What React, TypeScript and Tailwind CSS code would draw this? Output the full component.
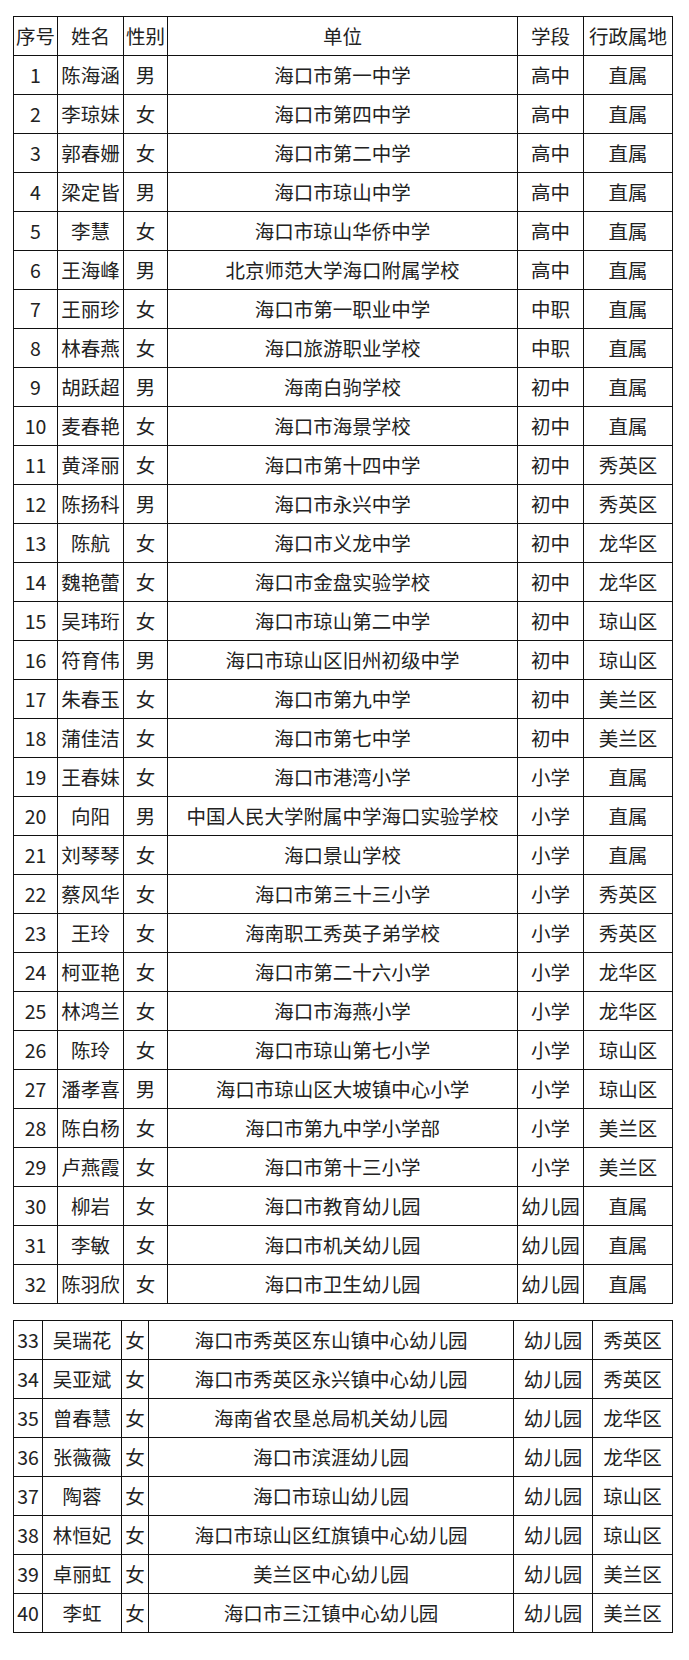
type Row = [string, string, string, string, string, string]

const rowsA: Row[] = [
  ['1', '陈海涵', '男', '海口市第一中学', '高中', '直属'],
  ['2', '李琼妹', '女', '海口市第四中学', '高中', '直属'],
  ['3', '郭春姗', '女', '海口市第二中学', '高中', '直属'],
  ['4', '梁定皆', '男', '海口市琼山中学', '高中', '直属'],
  ['5', '李慧', '女', '海口市琼山华侨中学', '高中', '直属'],
  ['6', '王海峰', '男', '北京师范大学海口附属学校', '高中', '直属'],
  ['7', '王丽珍', '女', '海口市第一职业中学', '中职', '直属'],
  ['8', '林春燕', '女', '海口旅游职业学校', '中职', '直属'],
  ['9', '胡跃超', '男', '海南白驹学校', '初中', '直属'],
  ['10', '麦春艳', '女', '海口市海景学校', '初中', '直属'],
  ['11', '黄泽丽', '女', '海口市第十四中学', '初中', '秀英区'],
  ['12', '陈扬科', '男', '海口市永兴中学', '初中', '秀英区'],
  ['13', '陈航', '女', '海口市义龙中学', '初中', '龙华区'],
  ['14', '魏艳蕾', '女', '海口市金盘实验学校', '初中', '龙华区'],
  ['15', '吴玮珩', '女', '海口市琼山第二中学', '初中', '琼山区'],
  ['16', '符育伟', '男', '海口市琼山区旧州初级中学', '初中', '琼山区'],
  ['17', '朱春玉', '女', '海口市第九中学', '初中', '美兰区'],
  ['18', '蒲佳洁', '女', '海口市第七中学', '初中', '美兰区'],
  ['19', '王春妹', '女', '海口市港湾小学', '小学', '直属'],
  ['20', '向阳', '男', '中国人民大学附属中学海口实验学校', '小学', '直属'],
  ['21', '刘琴琴', '女', '海口景山学校', '小学', '直属'],
  ['22', '蔡风华', '女', '海口市第三十三小学', '小学', '秀英区'],
  ['23', '王玲', '女', '海南职工秀英子弟学校', '小学', '秀英区'],
  ['24', '柯亚艳', '女', '海口市第二十六小学', '小学', '龙华区'],
  ['25', '林鸿兰', '女', '海口市海燕小学', '小学', '龙华区'],
  ['26', '陈玲', '女', '海口市琼山第七小学', '小学', '琼山区'],
  ['27', '潘孝喜', '男', '海口市琼山区大坡镇中心小学', '小学', '琼山区'],
  ['28', '陈白杨', '女', '海口市第九中学小学部', '小学', '美兰区'],
  ['29', '卢燕霞', '女', '海口市第十三小学', '小学', '美兰区'],
  ['30', '柳岩', '女', '海口市教育幼儿园', '幼儿园', '直属'],
  ['31', '李敏', '女', '海口市机关幼儿园', '幼儿园', '直属'],
  ['32', '陈羽欣', '女', '海口市卫生幼儿园', '幼儿园', '直属'],
]

const rowsB: Row[] = [
  ['33', '吴瑞花', '女', '海口市秀英区东山镇中心幼儿园', '幼儿园', '秀英区'],
  ['34', '吴亚斌', '女', '海口市秀英区永兴镇中心幼儿园', '幼儿园', '秀英区'],
  ['35', '曾春慧', '女', '海南省农垦总局机关幼儿园', '幼儿园', '龙华区'],
  ['36', '张薇薇', '女', '海口市滨涯幼儿园', '幼儿园', '龙华区'],
  ['37', '陶蓉', '女', '海口市琼山幼儿园', '幼儿园', '琼山区'],
  ['38', '林恒妃', '女', '海口市琼山区红旗镇中心幼儿园', '幼儿园', '琼山区'],
  ['39', '卓丽虹', '女', '美兰区中心幼儿园', '幼儿园', '美兰区'],
  ['40', '李虹', '女', '海口市三江镇中心幼儿园', '幼儿园', '美兰区'],
]

const cell = 'h-[39px] border border-[#111] p-0 text-center align-middle whitespace-nowrap'

function Sheet({ widths, rows, header }: { widths: number[]; rows: Row[]; header?: Row }) {
  return (
    <table className="w-[659px] table-fixed border-collapse">
      <colgroup>
        {widths.map((w, i) => (
          <col key={i} style={{ width: w }} />
        ))}
      </colgroup>
      <tbody>
        {header && (
          <tr>
            {header.map((h, i) => (
              <td key={i} className={cell}>
                {h}
              </td>
            ))}
          </tr>
        )}
        {rows.map((r) => (
          <tr key={r[0]}>
            {r.map((v, i) => (
              <td key={i} className={cell}>
                {v}
              </td>
            ))}
          </tr>
        ))}
      </tbody>
    </table>
  )
}

export default function App() {
  return (
    <div
      className="h-[1660px] w-[689px] bg-white pl-[13px] pt-[16px] text-[19.5px] leading-none text-[#222]"
      style={{ fontFamily: '"Noto Sans CJK SC", "Noto Sans", sans-serif' }}
    >
      <div className="flex flex-col gap-[16px]">
        <Sheet
          widths={[44, 66, 44, 350, 66, 89]}
          header={['序号', '姓名', '性别', '单位', '学段', '行政属地']}
          rows={rowsA}
        />
        <Sheet widths={[29, 79, 27, 365, 79, 80]} rows={rowsB} />
      </div>
    </div>
  )
}
